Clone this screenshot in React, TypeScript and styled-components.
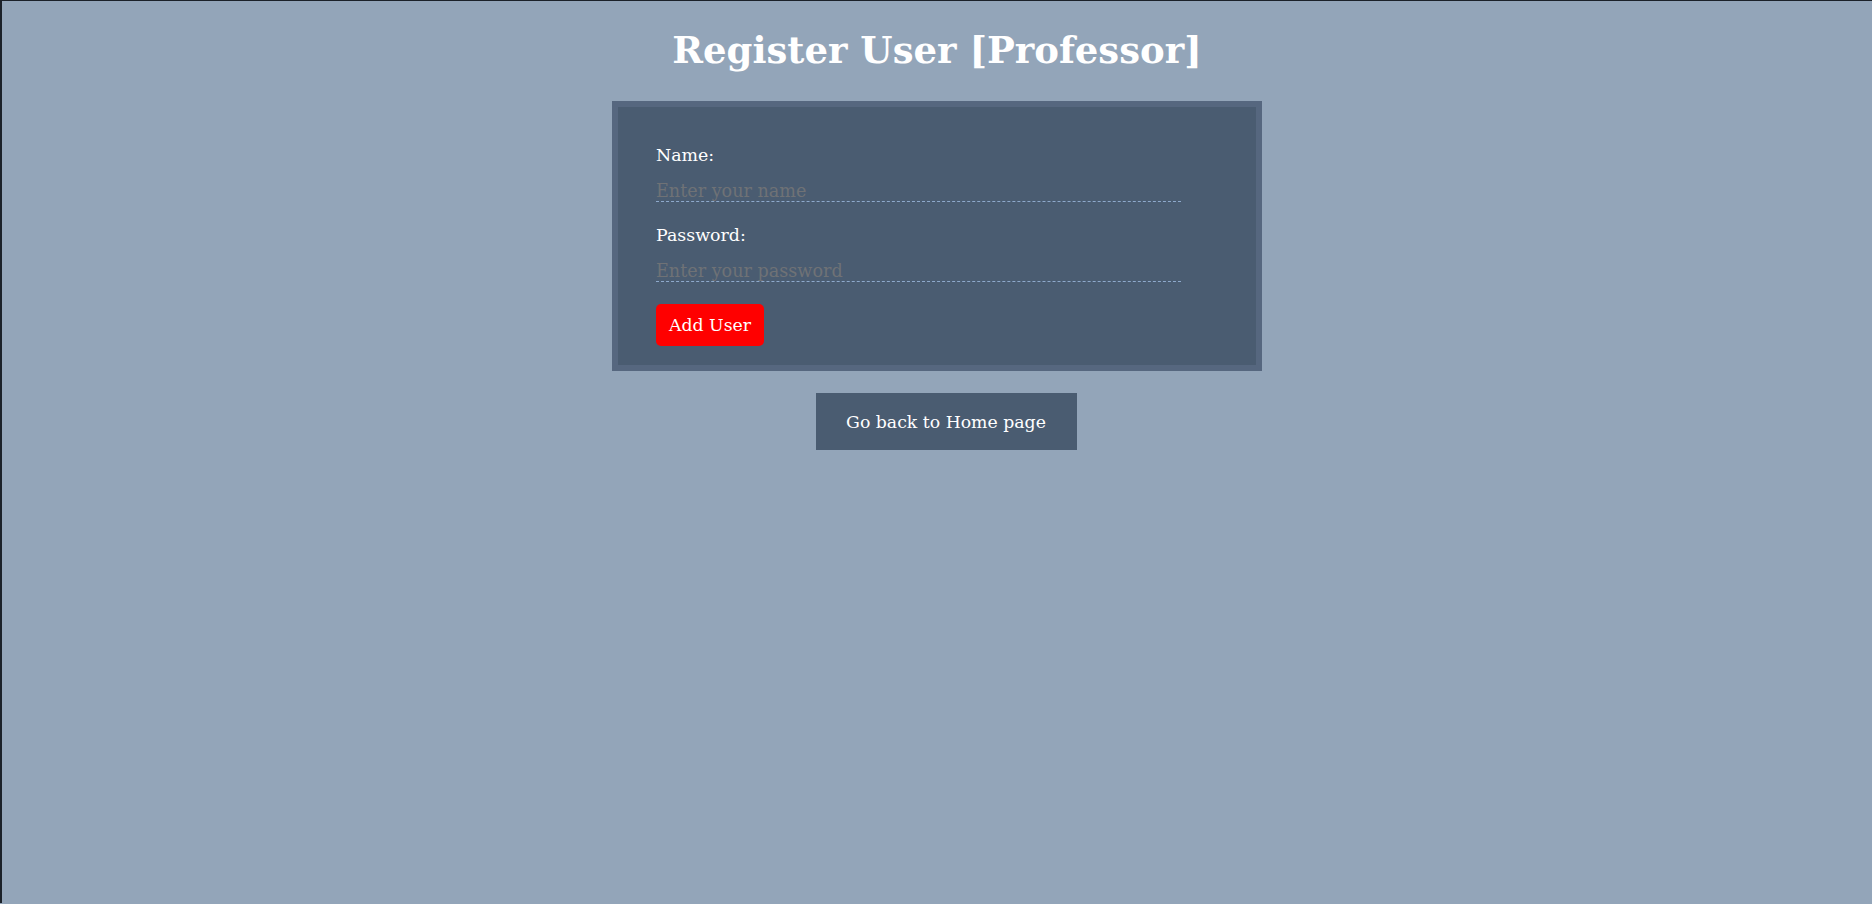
import React from "react";
import styled, { createGlobalStyle } from "styled-components";

const GlobalStyle = createGlobalStyle`
  html, body {
    margin: 0;
    padding: 0;
  }
  body {
    background: #93a5b9;
    font-family: "DejaVu Serif", "Liberation Serif", serif;
  }
`;

const Page = styled.div`
  min-height: 903px;
  box-sizing: border-box;
  border-left: 2px solid #1b2129;
  border-top: 1px solid #1b2129;
  display: flex;
  flex-direction: column;
  align-items: center;
`;

const Title = styled.h1`
  margin: 26px 0 0;
  font-size: 37px;
  line-height: 46px;
  font-weight: bold;
  color: #ffffff;
`;

const Card = styled.form`
  margin-top: 28px;
  width: 650px;
  box-sizing: border-box;
  border: 6px solid #56677f;
  background: #4a5c71;
  padding: 37px 0 19px 38px;
  display: flex;
  flex-direction: column;
  align-items: flex-start;
`;

const Label = styled.label`
  display: block;
  font-size: 17.4px;
  line-height: 22px;
  color: #ffffff;
`;

const Input = styled.input`
  display: block;
  width: 525px;
  box-sizing: border-box;
  margin: 9px 0 22px;
  padding: 5px 0 0;
  height: 27px;
  font-family: inherit;
  font-size: 17.6px;
  color: #ffffff;
  background: transparent;
  border: none;
  border-bottom: 1px dashed #8ea9cb;
  outline: none;
  &::placeholder {
    color: #6f7276;
  }
`;

const AddButton = styled.button`
  margin-top: 0;
  height: 42px;
  width: 108px;
  padding: 0;
  border: none;
  border-radius: 5px;
  background: #ff0000;
  color: #ffffff;
  font-family: inherit;
  font-size: 17.3px;
  cursor: pointer;
`;

const HomeButton = styled.button`
  margin: 22px 0 0 18px;
  width: 261px;
  height: 57px;
  padding: 0;
  border: none;
  background: #4a5c71;
  color: #ffffff;
  font-family: inherit;
  font-size: 17.3px;
  cursor: pointer;
`;

export default function App() {
  return (
    <>
      <GlobalStyle />
      <Page>
        <Title>Register User [Professor]</Title>
        <Card onSubmit={(e) => e.preventDefault()}>
          <Label htmlFor="name">Name:</Label>
          <Input id="name" type="text" placeholder="Enter your name" />
          <Label htmlFor="password">Password:</Label>
          <Input id="password" type="password" placeholder="Enter your password" />
          <AddButton type="submit">Add User</AddButton>
        </Card>
        <HomeButton type="button">Go back to Home page</HomeButton>
      </Page>
    </>
  );
}
